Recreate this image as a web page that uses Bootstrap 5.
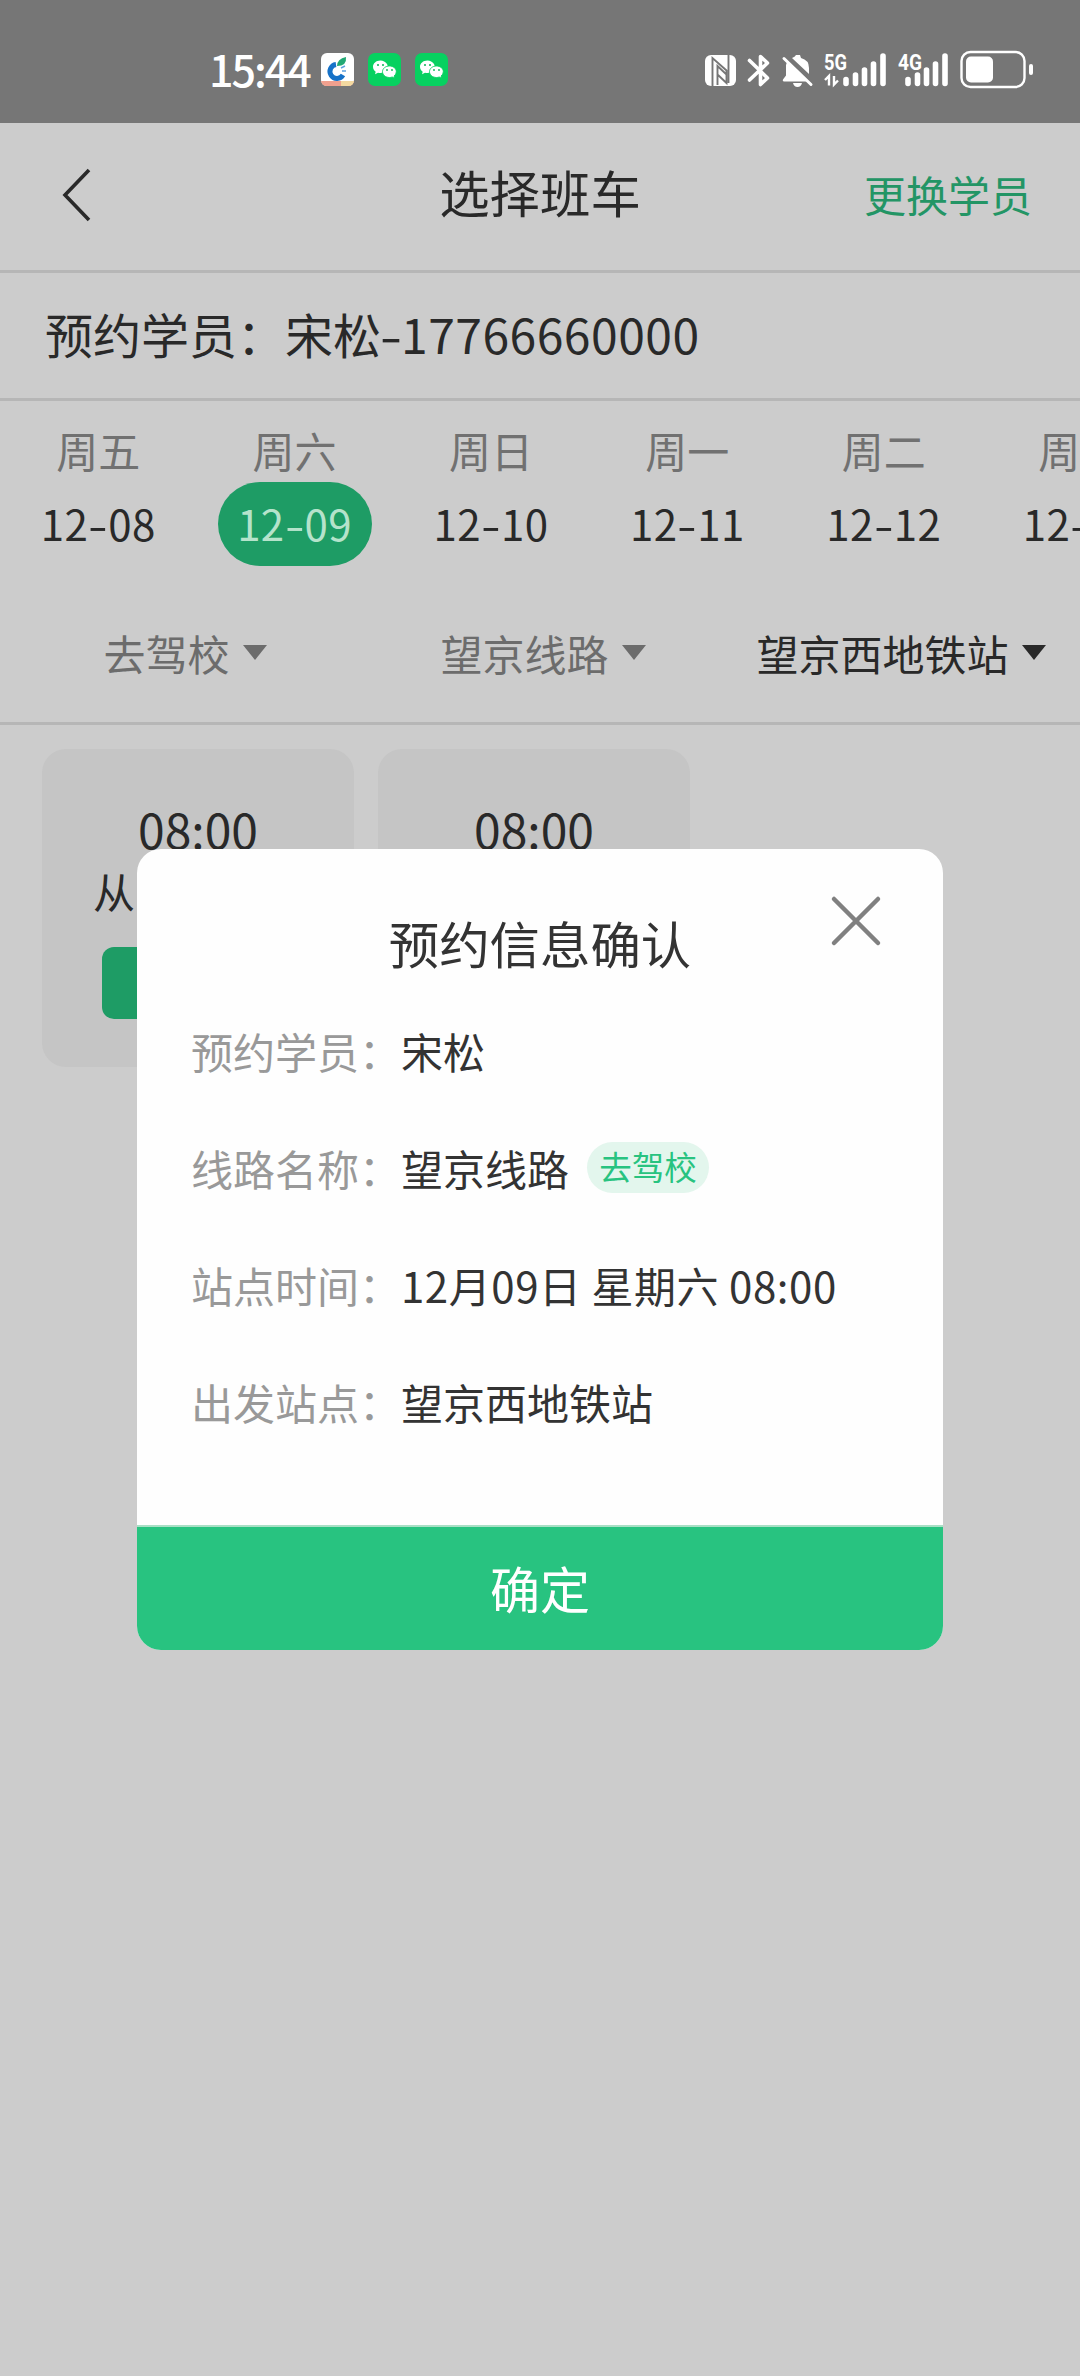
<!DOCTYPE html>
<html lang="zh-CN">
<head>
<meta charset="utf-8">
<meta name="viewport" content="width=device-width, initial-scale=1">
<title>选择班车</title>
<link href="https://cdn.jsdelivr.net/npm/bootstrap@5.3.0/dist/css/bootstrap.min.css" rel="stylesheet">
<style>
html,body{height:2376px;overflow:hidden}
body{font-family:"Noto Sans CJK SC",sans-serif;font-size:42px;line-height:1;background:#ccc;color:#292929;width:1080px}
.statusbar{height:123px;background:#767676;color:#fff;padding:16px 46px 0 209px}
.clock{font-size:43px;font-weight:500;letter-spacing:-2px;width:112px;padding-bottom:3px}
.apps{gap:14px}
.topbar{height:150px;border-bottom:3px solid #b6b6b6;padding:0 48px 4px 60px}
.side{width:200px;padding-bottom:1px}
.side-back{width:188px}
.title-lg{font-size:50.4px;padding-bottom:4px}
.accent{color:#239565}
.student{height:128px;border-bottom:3px solid #b6b6b6;padding:0 45px 5px;font-size:48px}
.phone{letter-spacing:.5px}
.days{height:182px;padding-top:26px}
.day{flex:0 0 196.4px}
.dow{color:#717171;height:55px;line-height:46px}
.pill{width:154px;height:84px;border-radius:42px;letter-spacing:.4px;padding-bottom:3px}
.pill.on{background:#1e9c65;color:#b5e3cb}
.hy{display:inline-block;width:20px;text-align:center;transform:scaleX(1.35)}
.filters{height:142px;border-bottom:3px solid #b6b6b6;padding:0 0 0 6px;color:#6c6c6c}
.filters>div{gap:13px}
.filters .now{color:#292929}
.caret{width:24px;height:15px}
.slots{gap:24px;padding:24px 42px}
.slot{width:312px;height:318px;border-radius:24px;background:#c5c5c5;padding:51px 51px 0}
.slot-time{font-size:48px;line-height:56px;height:56px}
.slot-from{line-height:50px;margin-top:10px}
.slot-btn{width:192px;height:72px;border-radius:12px;background:#1e9c65;margin:31px 0 0 9px}
.dialog{position:absolute;left:137px;top:849px;width:806px;height:801px;border-radius:24px;background:#fefefe;color:#333;overflow:hidden}
.dialog-head{height:143px;padding-top:45px}
.closer{position:absolute;left:693px;top:46px}
.info{height:117px;padding-left:54px}
.lbl{color:#999;width:210px}
.when{letter-spacing:.55px}
.tagx{width:122px;height:51px;border-radius:26px;background:#e3f6ed;color:#28c380;font-size:32.5px;margin-left:18px;padding-bottom:3px}
.ok{height:125px;background:#28c380;color:#fff;border-top:2px solid #a9dfc5;font-size:50px;padding-bottom:4px}
</style>
<script src="https://cdn.jsdelivr.net/npm/bootstrap@5.3.0/dist/js/bootstrap.bundle.min.js"></script>
</head>
<body>
<header class="statusbar d-flex align-items-center justify-content-between">
  <div class="d-flex align-items-center">
    <span class="clock">15:44</span>
    <div class="apps d-flex">
      <svg width="33" height="33" viewBox="0 0 33 33"><rect width="33" height="33" rx="6" fill="#fff"/><path d="M0 28h33a6 6 0 0 1-6 5H6a6 6 0 0 1-6-5z" fill="#f0a08e"/><path d="M20 28h13a6 6 0 0 1-6 5h-7z" fill="#f3d9a0"/><path d="M15 11.500A7 7 0 1 0 22 22" fill="none" stroke="#1672c8" stroke-width="5"/><path d="M16 13q0-7 9-9q1 9-9 9z" fill="#22a873"/><path d="M20 15l4-2M21 18h4" stroke="#5fa3df" stroke-width="1.500"/></svg>
      <svg width="33" height="33" viewBox="0 0 33 33"><use href="#wx"/></svg>
      <svg width="33" height="33" viewBox="0 0 33 33"><g id="wx"><rect width="33" height="33" rx="7" fill="#07d160"/><path d="M12.500 7.500c-4.500 0-7.500 3-7.500 6.300 0 2 1 3.700 2.700 4.900L7 21.200l3-1.500q5 1.200 8-2.200 3-3 1-6.500-2.500-3.500-6.500-3.500z" fill="#fff"/><path d="M21.500 13c-4 0-7 2.500-7 5.700s3 5.800 7 5.800q1.500 0 2.700-.5l2.500 1.300-.6-2.300q2.200-1.600 2.200-4.300c0-3.200-3-5.700-6.800-5.700z" fill="#fff" stroke="#07d160" stroke-width=".9"/><g fill="#07b355"><circle cx="10" cy="12" r="1"/><circle cx="15" cy="12" r="1"/><circle cx="19" cy="17" r=".9"/><circle cx="24" cy="17" r=".9"/></g></g></svg>
    </div>
  </div>
  <svg width="330" height="40" viewBox="704 49 330 40" fill="#fff">
    <rect x="705" y="54" width="31" height="31" rx="6"/>
    <path d="M712.500 85V57l14 12.500V82l-9-8.500M717.500 84V65l9 8.500M728.500 82V54" fill="none" stroke="#767676" stroke-width="1.900"/>
    <path d="M749.500 59.500l18 17.500-7 6.500V55.500l7 6.500-18 17" fill="none" stroke="#fff" stroke-width="3.600" stroke-linecap="round" stroke-linejoin="round"/>
    <path d="M787 61l20 19.500h-22q-3 0-2-2l3-4V64zM792 57q3-1 4-3h4l1 3q8 2 8 10v6z"/><path d="M784 57.500l27 26" stroke="#fff" stroke-width="3" stroke-linecap="round"/><path d="M793 82h9q-1 4-4.500 4t-4.500-4z"/>
    <g stroke="#fff" stroke-width="5.600" stroke-linecap="round"><path d="M846 78.500v4M855.500 74v8.500M864.500 69v13.500M873.500 63v19.500M883 55v27.500M908 78.500v4M917.500 74v8.500M926.500 69v13.500M935.500 63v19.500M945 55v27.500"/></g>
    <g font-family="Roboto,sans-serif" font-weight="700" font-size="22"><text x="824" y="69" textLength="23" lengthAdjust="spacingAndGlyphs">5G</text><text x="898" y="69" textLength="24" lengthAdjust="spacingAndGlyphs">4G</text></g>
    <path d="M825 79l4-4v9.500M834 75v8.500l4-4" fill="none" stroke="#fff" stroke-width="2.400"/>
    <rect x="961.500" y="51" width="63" height="35" rx="9" fill="none" stroke="#fff" stroke-width="2.400"/><rect x="966" y="55.500" width="27" height="26" rx="5"/><rect x="1029" y="63" width="4" height="11" rx="2"/>
  </svg>
</header>
<nav class="topbar d-flex align-items-center justify-content-between">
  <div class="side-back"><svg width="32" height="54" viewBox="0 0 32 54"><path d="M29 2L5 27l24 25" fill="none" stroke="#292929" stroke-width="3.600"/></svg></div>
  <div class="title-lg">选择班车</div>
  <div class="side accent text-end">更换学员</div>
</nav>
<section class="student d-flex align-items-center">预约学员：宋松<span class="hy">-</span><span class="phone">17766660000</span></section>
<section class="days d-flex overflow-hidden text-center">
  <div class="day d-flex flex-column align-items-center"><div class="dow">周五</div><div class="pill d-flex align-items-center justify-content-center">12<span class="hy">-</span>08</div></div>
  <div class="day d-flex flex-column align-items-center"><div class="dow">周六</div><div class="pill on d-flex align-items-center justify-content-center">12<span class="hy">-</span>09</div></div>
  <div class="day d-flex flex-column align-items-center"><div class="dow">周日</div><div class="pill d-flex align-items-center justify-content-center">12<span class="hy">-</span>10</div></div>
  <div class="day d-flex flex-column align-items-center"><div class="dow">周一</div><div class="pill d-flex align-items-center justify-content-center">12<span class="hy">-</span>11</div></div>
  <div class="day d-flex flex-column align-items-center"><div class="dow">周二</div><div class="pill d-flex align-items-center justify-content-center">12<span class="hy">-</span>12</div></div>
  <div class="day d-flex flex-column align-items-center"><div class="dow">周三</div><div class="pill d-flex align-items-center justify-content-center">12<span class="hy">-</span>13</div></div>
</section>
<section class="filters row g-0">
  <div class="col-4 d-flex align-items-center justify-content-center">去驾校<svg class="caret" viewBox="0 0 24 15"><path d="M0 0h24L12 15z" fill="currentColor"/></svg></div>
  <div class="col-4 d-flex align-items-center justify-content-center">望京线路<svg class="caret" viewBox="0 0 24 15"><path d="M0 0h24L12 15z" fill="currentColor"/></svg></div>
  <div class="col-4 now d-flex align-items-center justify-content-center">望京西地铁站<svg class="caret" viewBox="0 0 24 15"><path d="M0 0h24L12 15z" fill="currentColor"/></svg></div>
</section>
<main class="slots d-flex">
  <div class="slot"><div class="slot-time text-center">08:00</div><div class="slot-from">从</div><div class="slot-btn"></div></div>
  <div class="slot"><div class="slot-time text-center">08:00</div></div>
</main>
<div class="dialog d-flex flex-column" role="dialog">
  <div class="dialog-head"><div class="title-lg text-center mt-4">预约信息确认</div></div>
  <svg class="closer" width="52" height="52" viewBox="0 0 52 52"><path d="M4 4l44 44M48 4L4 48" stroke="#808080" stroke-width="4.500" stroke-linecap="round"/></svg>
  <div class="info d-flex align-items-center"><span class="lbl">预约学员：</span>宋松</div>
  <div class="info d-flex align-items-center"><span class="lbl">线路名称：</span>望京线路<span class="tagx d-flex align-items-center justify-content-center">去驾校</span></div>
  <div class="info d-flex align-items-center"><span class="lbl">站点时间：</span><span class="when">12月09日 星期六 08:00</span></div>
  <div class="info d-flex align-items-center"><span class="lbl">出发站点：</span>望京西地铁站</div>
  <div class="ok mt-auto d-flex align-items-center justify-content-center">确定</div>
</div>
</body>
</html>
